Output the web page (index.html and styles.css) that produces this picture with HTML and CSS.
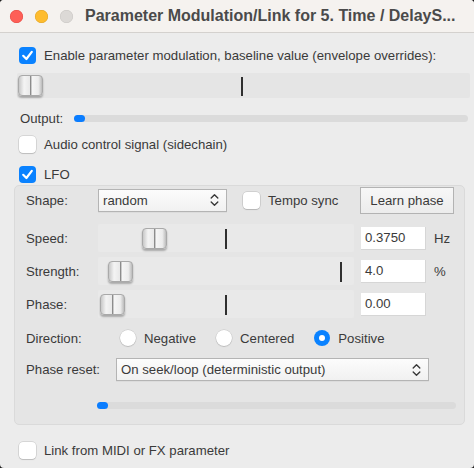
FILE: index.html
```html
<!DOCTYPE html>
<html>
<head>
<meta charset="utf-8">
<link rel="stylesheet" href="styles.css">
</head>
<body>
<div class="window">
  <div class="titlebar">
    <span class="light red"></span>
    <span class="light yellow"></span>
    <span class="light gray"></span>
    <span class="title">Parameter Modulation/Link for 5. Time / DelayS...</span>
  </div>
  <div class="content">
    <label class="check first">
      <span class="box on"><svg viewBox="0 0 17 17" width="17" height="17"><path d="M4.2 8.8 L7.4 12 L12.8 4.8" fill="none" stroke="#fff" stroke-width="2.2" stroke-linecap="round" stroke-linejoin="round"/></svg></span>
      <span>Enable parameter modulation, baseline value (envelope overrides):</span>
    </label>
    <div class="track main-track">
      <span class="thumb" style="left:1px"></span>
      <span class="tick" style="left:224px"></span>
    </div>
    <div class="output-row">
      <span class="out-label">Output:</span>
      <div class="progress"><span class="dot"></span></div>
    </div>
    <label class="check audio">
      <span class="box"></span>
      <span>Audio control signal (sidechain)</span>
    </label>
    <label class="check lfo">
      <span class="box on"><svg viewBox="0 0 17 17" width="17" height="17"><path d="M4.2 8.8 L7.4 12 L12.8 4.8" fill="none" stroke="#fff" stroke-width="2.2" stroke-linecap="round" stroke-linejoin="round"/></svg></span>
      <span>LFO</span>
    </label>
    <div class="group">
      <div class="row shape-row">
        <span class="lbl">Shape:</span>
        <div class="select shape-select">
          <span>random</span>
          <svg class="chev" viewBox="0 0 9 14" width="9" height="14"><path d="M1.2 5 L4.5 1.7 L7.8 5 M1.2 9 L4.5 12.3 L7.8 9" fill="none" stroke="#3a3a3a" stroke-width="1.4" stroke-linecap="round" stroke-linejoin="round"/></svg>
        </div>
        <label class="check inline tempo">
          <span class="box"></span>
          <span>Tempo sync</span>
        </label>
        <button class="btn">Learn phase</button>
      </div>
      <div class="row slider-row speed">
        <span class="lbl">Speed:</span>
        <div class="track">
          <span class="thumb" style="left:44px"></span>
          <span class="tick" style="left:127px"></span>
        </div>
        <div class="input">0.3750</div>
        <span class="unit">Hz</span>
      </div>
      <div class="row slider-row strength">
        <span class="lbl">Strength:</span>
        <div class="track">
          <span class="thumb" style="left:10px"></span>
          <span class="tick" style="left:242px"></span>
        </div>
        <div class="input">4.0</div>
        <span class="unit">%</span>
      </div>
      <div class="row slider-row phase">
        <span class="lbl">Phase:</span>
        <div class="track">
          <span class="thumb" style="left:2px"></span>
          <span class="tick" style="left:127px"></span>
        </div>
        <div class="input">0.00</div>
      </div>
      <div class="row direction">
        <span class="lbl">Direction:</span>
        <div class="radios">
          <label class="radio"><span class="circle"></span><span>Negative</span></label>
          <label class="radio"><span class="circle"></span><span>Centered</span></label>
          <label class="radio"><span class="circle on"></span><span>Positive</span></label>
        </div>
      </div>
      <div class="row reset-row">
        <span class="lbl reset-lbl">Phase reset:</span>
        <div class="select reset-select">
          <span>On seek/loop (deterministic output)</span>
          <svg class="chev" viewBox="0 0 9 14" width="9" height="14"><path d="M1.2 5 L4.5 1.7 L7.8 5 M1.2 9 L4.5 12.3 L7.8 9" fill="none" stroke="#3a3a3a" stroke-width="1.4" stroke-linecap="round" stroke-linejoin="round"/></svg>
        </div>
      </div>
      <div class="progress group-progress"><span class="dot"></span></div>
    </div>
    <label class="check link">
      <span class="box"></span>
      <span>Link from MIDI or FX parameter</span>
    </label>
  </div>
</div>
</body>
</html>
```
FILE: styles.css
```css
* { box-sizing: border-box; }
html { background: #1e1e1e; }
body {
  margin: 0;
  width: 474px;
  height: 468px;
  overflow: hidden;
  font-family: "Liberation Sans", Arial, sans-serif;
  font-size: 13.2px;
  color: #3a3a3a;
}
.window {
  width: 474px;
  height: 468px;
  background: #ececec;
  border-radius: 4px;
  overflow: hidden;
  display: flex;
  flex-direction: column;
}
.titlebar {
  height: 33px;
  flex: none;
  background: #f5f2ef;
  border-bottom: 1px solid #d4d1ce;
  display: flex;
  align-items: center;
  padding-left: 10px;
}
.light {
  width: 13px;
  height: 13px;
  border-radius: 50%;
  margin-right: 12px;
  flex: none;
}
.red { background: #fe5f57; box-shadow: inset 0 0 0 0.5px #e2463f; }
.yellow { background: #febc2e; box-shadow: inset 0 0 0 0.5px #dea123; }
.gray { background: #dcd9d6; box-shadow: inset 0 0 0 0.5px #c8c5c2; }
.title {
  font-weight: bold;
  font-size: 16px;
  color: #4a4a4a;
  white-space: nowrap;
}
.content {
  display: flex;
  flex-direction: column;
}
.check {
  display: flex;
  align-items: center;
  gap: 8px;
  height: 20px;
  padding-left: 19px;
  white-space: nowrap;
}
.box {
  width: 17px;
  height: 17px;
  flex: none;
  border-radius: 4px;
  background: #fff;
  box-shadow: 0 0 0 0.5px rgba(0,0,0,0.18), 0 1px 1px rgba(0,0,0,0.12);
  display: flex;
}
.box.on { background: #0a82ff; box-shadow: none; }
.first { margin-top: 12px; }
.track {
  position: relative;
  background: #e5e5e5;
  border-radius: 2px;
}
.main-track {
  margin: 8px 4px 0 17px;
  height: 25px;
}
.thumb {
  position: absolute;
  top: 2px;
  width: 25px;
  height: 21px;
  border-radius: 4px;
  border: 1px solid #a9a9a9;
  background: linear-gradient(to right, #c8c8c8 0, #f4f4f4 22%, #e9e9e9 46%, #8c8c8c 48%, #8c8c8c 52%, #f6f6f6 56%, #ececec 84%, #bcbcbc 100%);
  box-shadow: 0 2px 2px rgba(0,0,0,0.28);
}
.tick {
  position: absolute;
  top: 4px;
  width: 2px;
  height: 19px;
  background: #2f2f2f;
}
.output-row {
  margin-top: 12px;
  height: 16px;
  display: flex;
  align-items: center;
  padding-left: 20px;
}
.out-label { width: 54px; }
.progress {
  position: relative;
  height: 7px;
  border-radius: 4px;
  background: #dbdbdb;
  width: 394px;
}
.dot {
  position: absolute;
  left: 0;
  top: 0;
  width: 11px;
  height: 7px;
  border-radius: 4px;
  background: #0a7dff;
}
.audio { margin-top: 8px; }
.lfo { margin-top: 10px; }
.group {
  margin: 1px 9px 0 14px;
  height: 240px;
  border: 1px solid #dadada;
  border-radius: 5px;
  background: #e5e5e5;
  padding: 2px 10px 0 11px;
  display: flex;
  flex-direction: column;
}
.row {
  display: flex;
  align-items: center;
  white-space: nowrap;
}
.lbl { width: 72px; flex: none; }
.shape-row { height: 24px; }
.select {
  height: 23px;
  border: 1px solid #b4b4b4;
  background: linear-gradient(#fcfcfc, #f1f1f1);
  display: flex;
  align-items: center;
  justify-content: space-between;
  padding: 0 7px 0 4px;
  box-shadow: 0 1px 0 rgba(0,0,0,0.04);
}
.shape-select { width: 129px; }
.chev { flex: none; }
.check.inline { padding-left: 0; margin-left: 16px; }
.btn {
  margin-left: auto;
  width: 94px;
  height: 27px;
  font-family: inherit;
  font-size: 13.2px;
  color: #3a3a3a;
  border: 1px solid #b3b3b3;
  background: linear-gradient(#f7f7f7, #ececec);
  padding: 0;
}
.slider-row { height: 28px; }
.slider-row .track {
  width: 256px;
  height: 28px;
  background: #e9e9e9;
}
.slider-row .thumb { top: 4px; }
.slider-row .tick { top: 5px; height: 20px; }
.speed { margin-top: 12px; }
.strength, .phase { margin-top: 5px; }
.input {
  margin-left: 7px;
  width: 65px;
  height: 23px;
  background: #fff;
  border-right: 1px solid #d6d6d6;
  border-bottom: 1px solid #d6d6d6;
  padding-left: 4px;
  display: flex;
  align-items: center;
}
.unit { margin-left: 8px; }
.direction { margin-top: 10px; height: 20px; }
.radios {
  display: flex;
  gap: 20px;
  margin-left: 22px;
}
.radio { display: flex; align-items: center; gap: 8px; }
.circle {
  width: 16px;
  height: 16px;
  border-radius: 50%;
  background: #fff;
  box-shadow: 0 0 0 0.5px rgba(0,0,0,0.15), 0 1px 1px rgba(0,0,0,0.12);
  display: flex;
  align-items: center;
  justify-content: center;
}
.circle.on { background: #0a82ff; box-shadow: none; }
.circle.on::after {
  content: "";
  width: 6px;
  height: 6px;
  border-radius: 50%;
  background: #fff;
}
.reset-row { margin-top: 10px; height: 23px; }
.reset-lbl { width: 90px; }
.reset-select { width: 313px; }
.group-progress { margin: 21px 0 0 71px; width: 359px; }
.link { margin-top: 15px; }
```
